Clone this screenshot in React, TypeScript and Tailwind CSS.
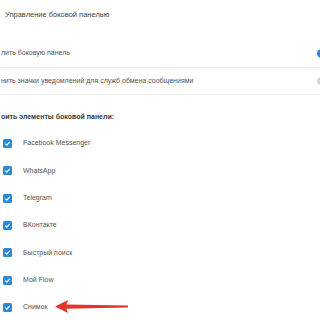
import React from "react";

const items = [
  "Facebook Messenger",
  "WhatsApp",
  "Telegram",
  "ВКонтакте",
  "Быстрый поиск",
  "Мой Flow",
  "Снимок",
];

function Check() {
  return (
    <div className="w-[9px] h-[9px] rounded-[1.5px] bg-[#2a8ad6] flex items-center justify-center shrink-0">
      <svg width="7" height="7" viewBox="0 0 10 10">
        <path d="M1.8 5.2 L4 7.3 L8.3 2.6" fill="none" stroke="#fff" strokeWidth="1.7" />
      </svg>
    </div>
  );
}

export default function App() {
  return (
    <div
      className="relative w-[320px] h-[320px] overflow-hidden bg-white text-[#555]"
      style={{ fontFamily: '"Liberation Sans", Arial, sans-serif' }}
    >
      <div className="h-[30px] flex items-center pl-[5px] text-[7.5px] text-[#444]">
        Управление боковой панелью
      </div>
      <div className="h-[10px]" />
      <div className="h-[28px] flex items-center border-b border-[#ececec] pl-[1px] text-[7px]">
        <span>лить боковую панель</span>
        <div className="ml-auto mr-[-14px] w-[17px] h-[9px] rounded-full bg-[#2a8ad6]" />
      </div>
      <div className="h-[27px] flex items-center border-b border-[#ececec] pl-[1px] text-[7px]">
        <span>нить значки уведомлений для служб обмена сообщениями</span>
        <div className="ml-auto mr-[-14px] w-[17px] h-[8px] rounded-full bg-[#d6d6d6]" />
      </div>
      <div className="h-[9px]" />
      <div className="h-[26px] flex items-center pl-[1px] text-[7px] font-bold text-[#3a3a3a]">
        оить элементы боковой панели:
      </div>
      <div className="flex flex-col">
        {items.map((t) => (
          <div key={t} className="h-[27.3px] flex items-center pl-[3px] gap-[11px] text-[7px]">
            <Check />
            <span>{t}</span>
          </div>
        ))}
      </div>
      <svg
        className="absolute left-[52px] top-[298px]"
        width="80"
        height="18"
        viewBox="0 0 80 18"
      >
        <path
          d="M3 8.5 L16 2 L14.5 6.5 L76 7.6 L76 9.4 L14.5 10.8 L16 15 Z"
          fill="#e2362c"
        />
      </svg>
    </div>
  );
}
